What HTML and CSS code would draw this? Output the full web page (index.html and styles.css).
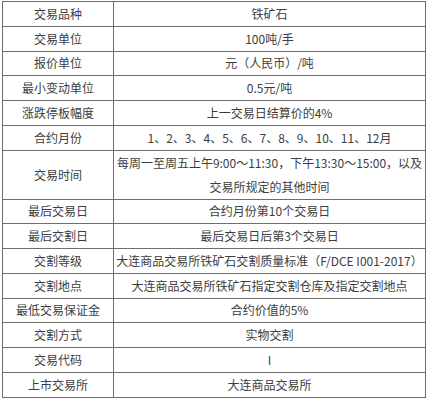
FILE: index.html
```html
<!DOCTYPE html>
<html lang="zh">
<head>
<meta charset="utf-8">
<link rel="stylesheet" href="styles.css">
</head>
<body>
<table class="spec">
<colgroup><col class="c1"><col class="c2"></colgroup>
<tbody>
<tr><td>交易品种</td><td>铁矿石</td></tr>
<tr><td>交易单位</td><td>100吨/手</td></tr>
<tr><td>报价单位</td><td>元（人民币）/吨</td></tr>
<tr><td>最小变动单位</td><td>0.5元/吨</td></tr>
<tr><td>涨跌停板幅度</td><td>上一交易日结算价的4%</td></tr>
<tr><td>合约月份</td><td>1、2、3、4、5、6、7、8、9、10、11、12月</td></tr>
<tr class="tall"><td>交易时间</td><td>每周一至周五上午9:00～11:30，下午13:30～15:00，以及交易所规定的其他时间</td></tr>
<tr><td>最后交易日</td><td>合约月份第10个交易日</td></tr>
<tr><td>最后交割日</td><td>最后交易日后第3个交易日</td></tr>
<tr><td>交割等级</td><td>大连商品交易所铁矿石交割质量标准（F/DCE I001-2017）</td></tr>
<tr><td>交割地点</td><td>大连商品交易所铁矿石指定交割仓库及指定交割地点</td></tr>
<tr><td>最低交易保证金</td><td>合约价值的5%</td></tr>
<tr><td>交割方式</td><td>实物交割</td></tr>
<tr><td>交易代码</td><td>I</td></tr>
<tr><td>上市交易所</td><td>大连商品交易所</td></tr>
</tbody>
</table>
</body>
</html>
```
FILE: styles.css
```css
html, body {
  margin: 0;
  padding: 0;
  background: #ffffff;
}
body {
  padding: 1px 0 0 2px;
  font-family: "Noto Sans CJK SC", "Noto Sans", sans-serif;
  font-size: 12px;
  color: #3d3d3d;
}
.spec {
  border-collapse: collapse;
  width: 424px;
  table-layout: fixed;
}
.c1 { width: 111px; }
.spec td {
  border: 1px solid #6e6e6e;
  height: 23.75px;
  padding: 0;
  text-align: center;
  vertical-align: middle;
  line-height: 16px;
}
.spec tr.tall td {
  height: 47.5px;
  line-height: 24px;
}
```
